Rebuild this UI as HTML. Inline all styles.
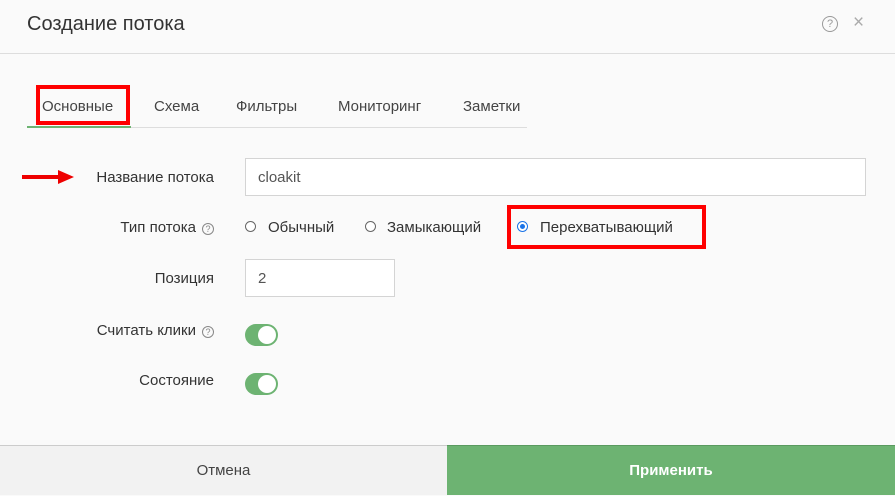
<!DOCTYPE html><html><head><style>
body{margin:0;width:895px;height:494px;background:#fafafa;font-family:"Liberation Sans",sans-serif;position:relative;overflow:hidden;color:#333}
.a{position:absolute}
.t{font-size:15px;color:#444;top:98px}
.lbl{font-size:15px;color:#333;text-align:right;right:681px}
.inp{border:1px solid #d4d4d4;background:#fff;font-size:15px;color:#555;box-sizing:border-box;padding-left:12px;line-height:36px}
.rad{width:11px;height:11px;border:1px solid #666;border-radius:50%;box-sizing:border-box;background:#fff}
.q{width:12px;height:12px;border:1px solid #888;border-radius:50%;font-size:9px;line-height:11px;text-align:center;color:#888;box-sizing:border-box}
.tog{width:33px;height:22px;border-radius:11px;background:#6db372}
.tog:after{content:"";position:absolute;right:2px;top:2px;width:18px;height:18px;border-radius:50%;background:#fff}
</style></head><body>
<div class="a" style="left:27px;top:13px;font-size:20px;color:#333">Создание потока</div>
<div class="a" style="left:822px;top:16px;width:16px;height:16px;border:1px solid #999;border-radius:50%;box-sizing:border-box;font-size:11px;line-height:14px;text-align:center;color:#999">?</div>
<div class="a" style="left:853px;top:12px;font-size:19px;color:#aaa">×</div>
<div class="a" style="left:0;top:53px;width:895px;height:1px;background:#ddd"></div>

<div class="a" style="left:27px;top:127px;width:500px;height:1px;background:#ddd"></div>
<div class="a" style="left:27px;top:126px;width:104px;height:2px;background:#6db372"></div>
<div class="a" style="left:36px;top:85px;width:94px;height:40px;border:4px solid #f00;box-sizing:border-box"></div>
<div class="a t" style="left:42px">Основные</div>
<div class="a t" style="left:154px">Схема</div>
<div class="a t" style="left:236px">Фильтры</div>
<div class="a t" style="left:338px">Мониторинг</div>
<div class="a t" style="left:463px">Заметки</div>

<svg class="a" style="left:22px;top:170px" width="52" height="14"><rect x="0" y="5" width="38" height="4" fill="#e00"/><polygon points="36,0 52,7 36,14" fill="#e00"/></svg>
<div class="a lbl" style="top:169px">Название потока</div>
<div class="a inp" style="left:245px;top:158px;width:621px;height:38px;line-height:38px">cloakit</div>

<div class="a lbl" style="top:219px;right:699px">Тип потока</div>
<div class="a q" style="left:202px;top:223px">?</div>
<div class="a rad" style="left:245px;top:221px"></div>
<div class="a" style="left:268px;top:219px;font-size:15px">Обычный</div>
<div class="a rad" style="left:365px;top:221px"></div>
<div class="a" style="left:387px;top:219px;font-size:15px">Замыкающий</div>
<div class="a" style="left:507px;top:205px;width:199px;height:44px;border:4px solid #f00;box-sizing:border-box"></div>
<div class="a" style="left:517px;top:221px;width:11px;height:11px;border-radius:50%;border:1px solid #1a73e8;box-sizing:border-box;background:#fff"><div style="margin:2px;width:5px;height:5px;border-radius:50%;background:#1a73e8"></div></div>
<div class="a" style="left:540px;top:219px;font-size:15px">Перехватывающий</div>

<div class="a lbl" style="top:270px">Позиция</div>
<div class="a inp" style="left:245px;top:259px;width:150px;height:38px;line-height:38px">2</div>

<div class="a lbl" style="top:322px;right:699px">Считать клики</div>
<div class="a q" style="left:202px;top:326px">?</div>
<div class="a tog" style="left:245px;top:324px"></div>
<div class="a lbl" style="top:372px">Состояние</div>
<div class="a tog" style="left:245px;top:373px"></div>

<div class="a" style="left:0;top:445px;width:447px;height:49px;background:#f2f2f2;border-top:1px solid #ccc;text-align:center;line-height:50px;font-size:15px;color:#444">Отмена</div>
<div class="a" style="left:447px;top:445px;width:448px;height:49px;background:#6db372;border-top:1px solid #5a9a5f;text-align:center;line-height:50px;font-size:15px;color:#fff;font-weight:bold">Применить</div>
</body></html>
